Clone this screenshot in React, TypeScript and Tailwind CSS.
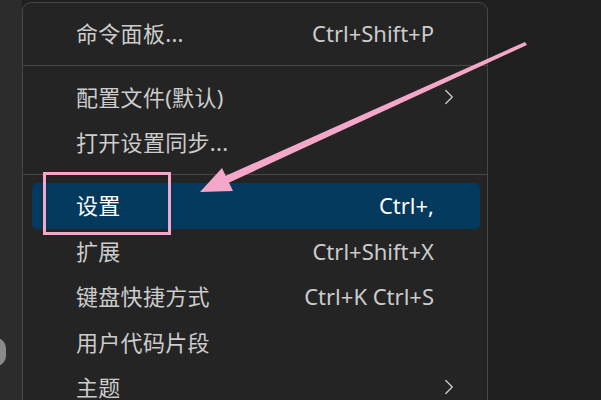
import { ChevronRight } from "lucide-react";

type Item = { label: string; shortcut?: string; submenu?: boolean; active?: boolean };

const groups: Item[][] = [
  [{ label: "命令面板...", shortcut: "Ctrl+Shift+P" }],
  [
    { label: "配置文件(默认)", submenu: true },
    { label: "打开设置同步..." },
  ],
  [
    { label: "设置", shortcut: "Ctrl+,", active: true },
    { label: "扩展", shortcut: "Ctrl+Shift+X" },
    { label: "键盘快捷方式", shortcut: "Ctrl+K Ctrl+S" },
    { label: "用户代码片段" },
    { label: "主题", submenu: true },
  ],
];

function Row({ item }: { item: Item }) {
  return (
    <div
      className={
        "mx-[9px] mr-[7px] flex h-[45.4px] items-center justify-between rounded-[5px] pl-[44px] pr-[46px] " +
        (item.active ? "bg-[#04395e] text-white" : "text-[#cccccc]")
      }
    >
      <span className="text-[22px] tracking-[0.3px]">{item.label}</span>
      {item.shortcut && <span className="text-[22px]">{item.shortcut}</span>}
      {item.submenu && (
        <ChevronRight className="-mr-[28px] h-[26px] w-[26px] text-[#cccccc]" strokeWidth={1.2} />
      )}
    </div>
  );
}

export default function App() {
  return (
    <div
      className="relative flex h-[400px] w-[601px] overflow-hidden bg-[#1f1f1f]"
      style={{ fontFamily: '"Noto Sans", "Noto Sans CJK SC", sans-serif' }}
    >
      <div className="relative w-[22px] shrink-0 bg-[#2c2c2c]">
        <div className="absolute left-[-14px] top-[338px] h-[28px] w-[20px] rounded-full bg-[#8a8a8a]" />
      </div>
      <div className="mt-[2px] w-[466px] shrink-0 rounded-t-[9px] border border-b-0 border-[#474747] bg-[#242424] pt-[8px]">
        {groups.map((g, gi) => (
          <div key={gi}>
            {gi > 0 && (
              <div className="flex h-[18px] items-center">
                <div className="h-px w-full bg-[#474747]" />
              </div>
            )}
            {g.map((item) => (
              <Row key={item.label} item={item} />
            ))}
          </div>
        ))}
      </div>

      <div className="pointer-events-none absolute left-[43px] top-[172px] h-[63px] w-[128px] border-[3px] border-[#f4a7c9]" />

      <svg className="pointer-events-none absolute inset-0" width="601" height="400">
        <polygon points="525,42 527,45 226,184 223,177" fill="#f4a7c9" />
        <polygon points="200,192 222,168 233,191" fill="#f4a7c9" />
      </svg>
    </div>
  );
}
